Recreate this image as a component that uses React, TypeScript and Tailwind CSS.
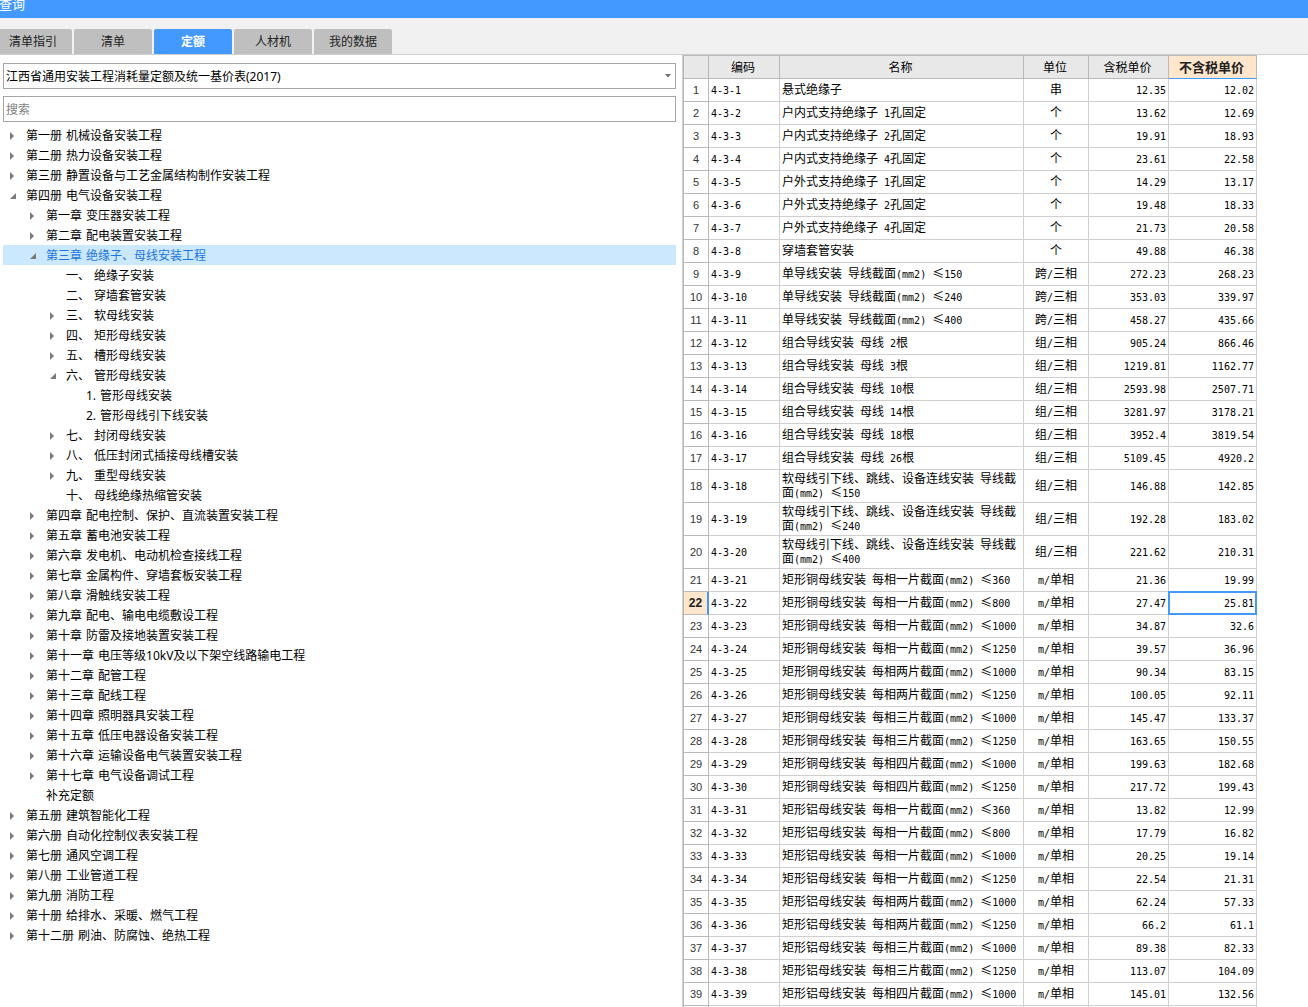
import { Fragment } from "react";

type TreeItem = {
  depth: number;
  no: string;
  title?: string;
  state?: "open" | "closed";
  selected?: boolean;
};

const tree: TreeItem[] = [
  { depth: 0, no: "第一册", title: "机械设备安装工程", state: "closed" },
  { depth: 0, no: "第二册", title: "热力设备安装工程", state: "closed" },
  { depth: 0, no: "第三册", title: "静置设备与工艺金属结构制作安装工程", state: "closed" },
  { depth: 0, no: "第四册", title: "电气设备安装工程", state: "open" },
  { depth: 1, no: "第一章", title: "变压器安装工程", state: "closed" },
  { depth: 1, no: "第二章", title: "配电装置安装工程", state: "closed" },
  { depth: 1, no: "第三章", title: "绝缘子、母线安装工程", state: "open", selected: true },
  { depth: 2, no: "一、", title: "绝缘子安装" },
  { depth: 2, no: "二、", title: "穿墙套管安装" },
  { depth: 2, no: "三、", title: "软母线安装", state: "closed" },
  { depth: 2, no: "四、", title: "矩形母线安装", state: "closed" },
  { depth: 2, no: "五、", title: "槽形母线安装", state: "closed" },
  { depth: 2, no: "六、", title: "管形母线安装", state: "open" },
  { depth: 3, no: "1.", title: "管形母线安装" },
  { depth: 3, no: "2.", title: "管形母线引下线安装" },
  { depth: 2, no: "七、", title: "封闭母线安装", state: "closed" },
  { depth: 2, no: "八、", title: "低压封闭式插接母线槽安装", state: "closed" },
  { depth: 2, no: "九、", title: "重型母线安装", state: "closed" },
  { depth: 2, no: "十、", title: "母线绝缘热缩管安装" },
  { depth: 1, no: "第四章", title: "配电控制、保护、直流装置安装工程", state: "closed" },
  { depth: 1, no: "第五章", title: "蓄电池安装工程", state: "closed" },
  { depth: 1, no: "第六章", title: "发电机、电动机检查接线工程", state: "closed" },
  { depth: 1, no: "第七章", title: "金属构件、穿墙套板安装工程", state: "closed" },
  { depth: 1, no: "第八章", title: "滑触线安装工程", state: "closed" },
  { depth: 1, no: "第九章", title: "配电、输电电缆敷设工程", state: "closed" },
  { depth: 1, no: "第十章", title: "防雷及接地装置安装工程", state: "closed" },
  { depth: 1, no: "第十一章", title: "电压等级10kV及以下架空线路输电工程", state: "closed" },
  { depth: 1, no: "第十二章", title: "配管工程", state: "closed" },
  { depth: 1, no: "第十三章", title: "配线工程", state: "closed" },
  { depth: 1, no: "第十四章", title: "照明器具安装工程", state: "closed" },
  { depth: 1, no: "第十五章", title: "低压电器设备安装工程", state: "closed" },
  { depth: 1, no: "第十六章", title: "运输设备电气装置安装工程", state: "closed" },
  { depth: 1, no: "第十七章", title: "电气设备调试工程", state: "closed" },
  { depth: 1, no: "补充定额" },
  { depth: 0, no: "第五册", title: "建筑智能化工程", state: "closed" },
  { depth: 0, no: "第六册", title: "自动化控制仪表安装工程", state: "closed" },
  { depth: 0, no: "第七册", title: "通风空调工程", state: "closed" },
  { depth: 0, no: "第八册", title: "工业管道工程", state: "closed" },
  { depth: 0, no: "第九册", title: "消防工程", state: "closed" },
  { depth: 0, no: "第十册", title: "给排水、采暖、燃气工程", state: "closed" },
  { depth: 0, no: "第十二册", title: "刷油、防腐蚀、绝热工程", state: "closed" },
];

const indent = ["pl-1", "pl-6", "pl-11", "pl-16"];

const rows: [string, string, string, string][] = [
  ["悬式绝缘子", "串", "12.35", "12.02"],
  ["户内式支持绝缘子 1孔固定", "个", "13.62", "12.69"],
  ["户内式支持绝缘子 2孔固定", "个", "19.91", "18.93"],
  ["户内式支持绝缘子 4孔固定", "个", "23.61", "22.58"],
  ["户外式支持绝缘子 1孔固定", "个", "14.29", "13.17"],
  ["户外式支持绝缘子 2孔固定", "个", "19.48", "18.33"],
  ["户外式支持绝缘子 4孔固定", "个", "21.73", "20.58"],
  ["穿墙套管安装", "个", "49.88", "46.38"],
  ["单导线安装 导线截面(mm2) ≤150", "跨/三相", "272.23", "268.23"],
  ["单导线安装 导线截面(mm2) ≤240", "跨/三相", "353.03", "339.97"],
  ["单导线安装 导线截面(mm2) ≤400", "跨/三相", "458.27", "435.66"],
  ["组合导线安装 母线 2根", "组/三相", "905.24", "866.46"],
  ["组合导线安装 母线 3根", "组/三相", "1219.81", "1162.77"],
  ["组合导线安装 母线 10根", "组/三相", "2593.98", "2507.71"],
  ["组合导线安装 母线 14根", "组/三相", "3281.97", "3178.21"],
  ["组合导线安装 母线 18根", "组/三相", "3952.4", "3819.54"],
  ["组合导线安装 母线 26根", "组/三相", "5109.45", "4920.2"],
  ["软母线引下线、跳线、设备连线安装 导线截面(mm2) ≤150", "组/三相", "146.88", "142.85"],
  ["软母线引下线、跳线、设备连线安装 导线截面(mm2) ≤240", "组/三相", "192.28", "183.02"],
  ["软母线引下线、跳线、设备连线安装 导线截面(mm2) ≤400", "组/三相", "221.62", "210.31"],
  ["矩形铜母线安装 每相一片截面(mm2) ≤360", "m/单相", "21.36", "19.99"],
  ["矩形铜母线安装 每相一片截面(mm2) ≤800", "m/单相", "27.47", "25.81"],
  ["矩形铜母线安装 每相一片截面(mm2) ≤1000", "m/单相", "34.87", "32.6"],
  ["矩形铜母线安装 每相一片截面(mm2) ≤1250", "m/单相", "39.57", "36.96"],
  ["矩形铜母线安装 每相两片截面(mm2) ≤1000", "m/单相", "90.34", "83.15"],
  ["矩形铜母线安装 每相两片截面(mm2) ≤1250", "m/单相", "100.05", "92.11"],
  ["矩形铜母线安装 每相三片截面(mm2) ≤1000", "m/单相", "145.47", "133.37"],
  ["矩形铜母线安装 每相三片截面(mm2) ≤1250", "m/单相", "163.65", "150.55"],
  ["矩形铜母线安装 每相四片截面(mm2) ≤1000", "m/单相", "199.63", "182.68"],
  ["矩形铜母线安装 每相四片截面(mm2) ≤1250", "m/单相", "217.72", "199.43"],
  ["矩形铝母线安装 每相一片截面(mm2) ≤360", "m/单相", "13.82", "12.99"],
  ["矩形铝母线安装 每相一片截面(mm2) ≤800", "m/单相", "17.79", "16.82"],
  ["矩形铝母线安装 每相一片截面(mm2) ≤1000", "m/单相", "20.25", "19.14"],
  ["矩形铝母线安装 每相一片截面(mm2) ≤1250", "m/单相", "22.54", "21.31"],
  ["矩形铝母线安装 每相两片截面(mm2) ≤1000", "m/单相", "62.24", "57.33"],
  ["矩形铝母线安装 每相两片截面(mm2) ≤1250", "m/单相", "66.2", "61.1"],
  ["矩形铝母线安装 每相三片截面(mm2) ≤1000", "m/单相", "89.38", "82.33"],
  ["矩形铝母线安装 每相三片截面(mm2) ≤1250", "m/单相", "113.07", "104.09"],
  ["矩形铝母线安装 每相四片截面(mm2) ≤1000", "m/单相", "145.01", "132.56"],
];

const tabs = ["清单指引", "清单", "定额", "人材机", "我的数据"];

/* Latin runs take a half-width monospace face so that two of them fill one Chinese character. */
function Mixed({ text }: { text: string }) {
  return (
    <>
      {text.split(/([\x20-\x7e]+)/).map((part, i) =>
        i % 2 ? (
          <span key={i} className="font-['DejaVu_Sans_Mono',monospace] text-[10px] leading-none">
            {part}
          </span>
        ) : (
          <Fragment key={i}>{part}</Fragment>
        ),
      )}
    </>
  );
}

function Arrow({ state }: { state?: "open" | "closed" }) {
  return (
    <svg viewBox="0 0 10 10" className="h-2.5 w-2.5 shrink-0 fill-[#7a7a7a]" aria-hidden="true">
      {state === "closed" && <path d="M3 1v8l4-4z" />}
      {state === "open" && <path d="M9 2v6H3z" />}
    </svg>
  );
}

function Tree() {
  return (
    <ul role="tree" className="mt-[3px]">
      {tree.map((item) => (
        <li
          key={item.no + item.title}
          role="treeitem"
          aria-selected={!!item.selected}
          aria-expanded={item.state ? item.state === "open" : undefined}
          className={item.selected ? "bg-[#cce8ff] text-[#1a75e0]" : ""}
        >
          <button type="button" className={`flex h-5 w-full items-center pt-0.5 whitespace-nowrap ${indent[item.depth]}`}>
            <Arrow state={item.state} />
            <span className="ml-[9px] flex gap-1">
              <span>{item.no}</span>
              {item.title && <span>{item.title}</span>}
            </span>
          </button>
        </li>
      ))}
    </ul>
  );
}

const th = "border-r border-b border-[#b9b9b9] py-0 pr-0.5 pl-0 text-center font-normal";
const td = "border-r border-b border-[#cfcfcf] pt-px pb-[3px]";

function PriceTable() {
  return (
    <table className="w-[574px] table-fixed border-separate border-spacing-0 border-t border-l border-[#b9b9b9] font-['Noto_Sans_CJK_SC',sans-serif] text-xs leading-[14px]">
      <colgroup>
        <col className="w-[25px]" />
        <col className="w-[71px]" />
        <col className="w-[244px]" />
        <col className="w-[65px]" />
        <col className="w-[80px]" />
        <col className="w-[88px]" />
      </colgroup>
      <thead>
        <tr className="h-[23px] bg-[#e8e8e8]">
          <th className={th} aria-label="序号" />
          <th className={th}>编码</th>
          <th className={th}>名称</th>
          <th className={th}>单位</th>
          <th className={th}>含税单价</th>
          <th className="border-r border-b border-r-[#b9b9b9] border-b-[#4399ff] bg-[#ffe6cc] py-0 pr-0.5 pl-0 text-center text-[13px] font-bold text-[#222]">
            不含税单价
          </th>
        </tr>
      </thead>
      <tbody>
        {rows.map(([name, unit, taxed, untaxed], i) => {
          const active = i === 21;
          return (
            <tr key={i} className="h-[23px]">
              <th
                scope="row"
                className={
                  active
                    ? "border-r-2 border-b border-r-[#4399ff] border-b-[#b9b9b9] bg-[#ffe6cc] p-0 text-center font-['Liberation_Sans',sans-serif] text-xs font-bold text-[#222]"
                    : "border-r border-b border-[#b9b9b9] p-0 text-center font-['Liberation_Sans',sans-serif] text-[11px] font-normal text-[#333]"
                }
              >
                {i + 1}
              </th>
              <td className={`${td} pl-0.5`}>
                <Mixed text={`4-3-${i + 1}`} />
              </td>
              <td className={`${td} pl-0.5`}>
                <Mixed text={name} />
              </td>
              <td className={`${td} text-center`}>
                <Mixed text={unit} />
              </td>
              <td className={`${td} pr-0.5 text-right`}>
                <Mixed text={taxed} />
              </td>
              <td
                className={
                  active
                    ? `${td} relative pr-0.5 text-right after:absolute after:-inset-px after:border-2 after:border-[#4399ff]`
                    : `${td} pr-0.5 text-right`
                }
              >
                <Mixed text={untaxed} />
              </td>
            </tr>
          );
        })}
        <tr className="h-[23px]">
          <th className={th} />
          <td className={td} />
          <td className={td} />
          <td className={td} />
          <td className={td} />
          <td className={td} />
        </tr>
      </tbody>
    </table>
  );
}

export default function App() {
  return (
    <div className="flex h-screen flex-col overflow-hidden bg-white font-['Noto_Sans','Noto_Sans_CJK_SC',sans-serif] text-xs text-black">
      <header className="h-[18px] shrink-0 overflow-hidden bg-[#4399ff]">
        <h1 className="-mt-1.5 -ml-px text-[13px] leading-5 text-white">查询</h1>
      </header>
      <nav className="flex shrink-0 gap-0.5 border-b border-[#cfcfcf] bg-[#f1f1f1] pt-[11px]">
        {tabs.map((tab, i) => (
          <button
            key={tab}
            type="button"
            className={`h-[25px] w-[78px] rounded-t-xs ${i === 0 ? "-ml-1.5" : ""} ${
              tab === "定额" ? "bg-[#4399ff] font-bold text-white" : "bg-[#bfbfbf] text-[#222]"
            }`}
          >
            {tab}
          </button>
        ))}
      </nav>
      <main className="grid min-h-0 grow grid-cols-[683fr_625fr]">
        <section className="min-w-0 border-r border-[#cfcfcf] pt-2 pr-1.5 pl-[3px]">
          <div className="relative">
            <select
              aria-label="定额库"
              className="h-[26px] w-full appearance-none border border-[#a6a6a6] bg-white pt-0.5 pl-0.5 outline-none"
            >
              <option>江西省通用安装工程消耗量定额及统一基价表(2017)</option>
            </select>
            <svg
              viewBox="0 0 6 4"
              className="pointer-events-none absolute top-[11px] right-[5px] h-1 w-1.5 fill-[#707070]"
              aria-hidden="true"
            >
              <path d="M0 0h6L3 3.5z" />
            </svg>
          </div>
          <input
            type="text"
            aria-label="搜索"
            placeholder="搜索"
            className="mt-[7px] block h-[26px] w-full border border-[#a6a6a6] pl-0.5 outline-none placeholder:text-[#808080]"
          />
          <Tree />
        </section>
        <section className="min-w-0 overflow-hidden">
          <PriceTable />
        </section>
      </main>
    </div>
  );
}
